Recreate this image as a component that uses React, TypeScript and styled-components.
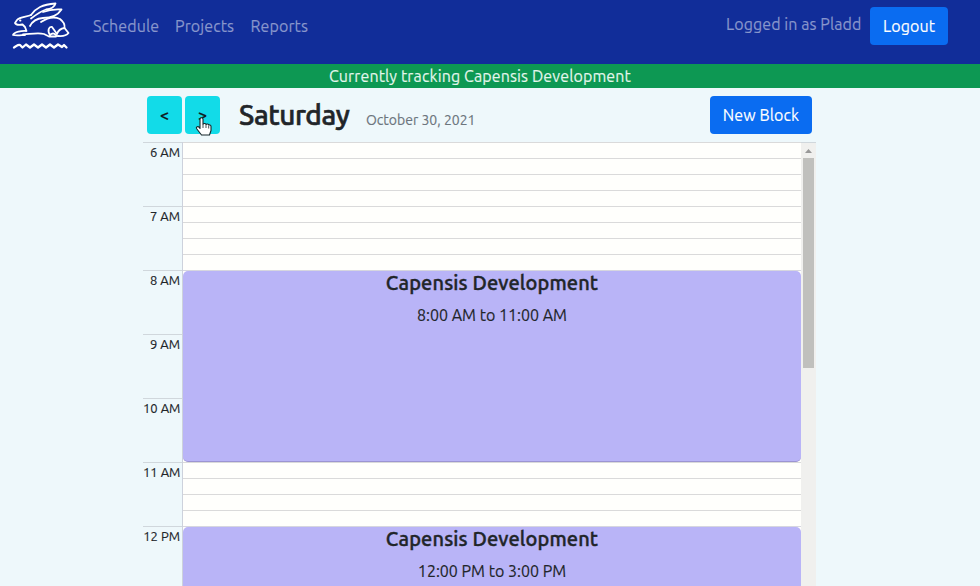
import React from "react";
import styled, { createGlobalStyle } from "styled-components";

const GlobalStyle = createGlobalStyle`
  *, *::before, *::after { box-sizing: border-box; }
  html, body, #root { height: 100%; }
  body {
    margin: 0;
    overflow: hidden;
    background: #eef8fb;
    color: #212529;
    font-family: Ubuntu, "Noto Sans", sans-serif;
    font-size: 16px;
    line-height: 24px;
    -webkit-text-stroke: 0.15px currentColor;
  }
`;

const Page = styled.div`
  display: flex;
  flex-direction: column;
  height: 586px;
  overflow: hidden;
`;

const Navbar = styled.nav`
  display: flex;
  flex: none;
  height: 64px;
  padding: 0 32px 0 12px;
  background: #112d99;
`;

const Logo = styled.svg`
  display: block;
  width: 58px;
  height: 52px;
`;

const NavLinks = styled.div`
  display: flex;
  gap: 16px;
  padding: 14px 0 0 23px;
`;

const Text = styled.span<{ $w: number }>`
  display: block;
  flex: none;
  width: ${(p) => p.$w}px;
  white-space: nowrap;
`;

const NavLink = styled(Text)`
  color: #8896cc;
  letter-spacing: 0.1px;
`;

const Account = styled.div`
  display: flex;
  gap: 8px;
  margin-left: auto;
  padding-top: 7px;
`;

const UserName = styled(Text)`
  padding-top: 5px;
  color: #8896cc;
  letter-spacing: 0.08px;
`;

const Button = styled.button<{ $w: number }>`
  display: flex;
  flex: none;
  align-items: center;
  justify-content: center;
  width: ${(p) => p.$w}px;
  height: 38px;
  padding: 0;
  border: 0;
  border-radius: 4px;
  background: #0a6cf1;
  color: #fff;
  font: inherit;
  letter-spacing: 0.1px;
`;

const Tracking = styled.div`
  flex: none;
  height: 24px;
  padding-right: 20px;
  background: #0d9853;
  color: #e4f6ec;
  letter-spacing: 0.12px;
  text-align: center;
`;

const Main = styled.main`
  display: flex;
  flex: 1;
  flex-direction: column;
  width: 673px;
  min-height: 0;
  margin-left: 143px;
`;

const DayHeader = styled.header`
  display: flex;
  flex: none;
  height: 54px;
  padding: 8px 4px 0;
`;

const StepButton = styled.button`
  position: relative;
  display: flex;
  flex: none;
  align-items: center;
  justify-content: center;
  width: 35px;
  height: 38px;
  margin-right: 3px;
  padding: 0;
  border: 0;
  border-radius: 4px;
  background: #12dbe8;
  color: #101c20;
  font: inherit;
  font-weight: 500;
`;

const Pointer = styled.svg`
  position: absolute;
  left: 10px;
  top: 21px;
  width: 19px;
  height: 21px;
`;

const Day = styled.h1`
  flex: none;
  width: 127px;
  margin: 0 0 0 16px;
  font-size: 28px;
  font-weight: 500;
  line-height: 38px;
  letter-spacing: -0.45px;
  -webkit-text-stroke: 0.6px currentColor;
`;

const DateLabel = styled(Text)`
  padding-top: 12px;
  color: #6c757d;
  font-size: 14px;
`;

const NewBlock = styled(Button)`
  margin-left: auto;
`;

const Scheduler = styled.section`
  display: grid;
  grid-template-columns: 39px 619px 15px;
  flex: 1;
  min-height: 0;
  overflow: hidden;
`;

const Hours = styled.div`
  display: flex;
  flex-direction: column;
`;

const Hour = styled.div`
  flex: none;
  height: 64px;
  padding-right: 2px;
  border-top: 1px solid #d0d7dc;
  font-size: 13px;
  line-height: 19px;
  text-align: right;
  white-space: nowrap;
`;

const Slots = styled.div`
  display: flex;
  flex-direction: column;
  border-left: 1px solid #cdd2dc;
  background: #fffffc;
`;

const Slot = styled.div`
  flex: none;
  height: 16px;
  border-top: 1px solid #dadada;
`;

const Booking = styled.div`
  flex: none;
  height: 192px;
  border-top: 1px solid #d6d6df;
`;

const BookingCard = styled.article`
  display: flex;
  flex-direction: column;
  align-items: center;
  gap: 8px;
  height: 191px;
  border-bottom: 1px solid #9c95d2;
  border-radius: 5px;
  background: #b9b4f7;
`;

const BookingTitle = styled.h2`
  margin: 0;
  font-size: 20px;
  font-weight: 500;
  line-height: 24px;
  letter-spacing: 0.12px;
  -webkit-text-stroke: 0.4px currentColor;
`;

const Scrollbar = styled.div`
  display: flex;
  flex-direction: column;
  justify-content: space-between;
  border-top: 1px solid #d0d7dc;
  background: #f0f0ee;
`;

const Thumb = styled.div`
  flex: none;
  width: 11px;
  height: 210px;
  margin: 0 0 auto 2px;
  background: #c0c0bd;
`;

const Arrow = styled.svg`
  display: block;
  flex: none;
  width: 15px;
`;

type Entry = { hour: string; booking?: string };

const hours: Entry[] = [
  { hour: "6 AM" },
  { hour: "7 AM" },
  { hour: "8 AM", booking: "8:00 AM to 11:00 AM" },
  { hour: "9 AM" },
  { hour: "10 AM" },
  { hour: "11 AM" },
  { hour: "12 PM", booking: "12:00 PM to 3:00 PM" },
];

function HareLogo() {
  return (
    <Logo viewBox="12 0 58 52" fill="none" stroke="#fff" strokeWidth="1.8" strokeLinecap="round" strokeLinejoin="round">
      <path d="M31 15C36 8 42 4.500 55.500 3.500C54.500 7 51 9 46 9.500C41 11 37 14 31 18.500" />
      <path d="M31 15C27 17 20 16.500 17 20L15 23C16 25 20 25 22.500 24.500L25 27L26.500 31C22 30.500 14 32 13 35C17 36 22 35 25 35" />
      <path d="M43 12C48 10 54 9 61.500 9.500C58 15 52 18 43 18C37 18.500 32 22 30 26" />
      <path d="M41 22C47 18 54 16 60 19C64 22 65 25 64.500 28L68.500 33C67 35 63 36.500 58 36" />
      <path d="M23 34.500C31 34 38 32.500 44 34L49 36.500L56 36.500" />
      <path d="M50 35C47 30 49 26.500 52 27L57 34C58 31 61 28.500 64.500 28" />
      <path d="M50 35C53 32 55 34 57 36" />
      <path d="M20 20.500h.5" strokeWidth="1.8" />
      <path d="M14 47.500C17 46 18 44 20 45L22.500 47.500L26 44.500L30 47.500L34 44.500L38 47.500L42 44.500L46 47.500L50 44.500L54 47.500L58 44.500L62 47L64 45L66.500 47.500" strokeWidth="2.3" />
    </Logo>
  );
}

function HandPointer() {
  return (
    <Pointer viewBox="0 0 19 21">
      <path d="M5 2.200C5 .2 8 .2 8 2.200V7C9 6 11 6.500 11 7.500C12 6.700 13.500 7 13.700 8C15 7.500 16 8.300 16 9.500V13.500L14.500 18H6.500L1.500 11.500C.8 10 3 9 4 10.200L5 11.500Z" fill="#fff" stroke="#17272a" strokeWidth="1.100" strokeLinejoin="round" />
      <path d="M8 7v4M11 8v3M13.700 8.500v3" stroke="#17272a" strokeWidth=".8" />
    </Pointer>
  );
}

export default function App() {
  return (
    <Page>
      <GlobalStyle />
      <Navbar>
        <HareLogo />
        <NavLinks>
          <NavLink $w={66}>Schedule</NavLink>
          <NavLink $w={59.5}>Projects</NavLink>
          <NavLink $w={58}>Reports</NavLink>
        </NavLinks>
        <Account>
          <UserName $w={136}>Logged in as Pladd</UserName>
          <Button $w={78}>Logout</Button>
        </Account>
      </Navbar>
      <Tracking>Currently tracking Capensis Development</Tracking>
      <Main>
        <DayHeader>
          <StepButton aria-label="Previous day">&lt;</StepButton>
          <StepButton aria-label="Next day">
            &gt;
            <HandPointer />
          </StepButton>
          <Day>Saturday</Day>
          <DateLabel $w={110}>October 30, 2021</DateLabel>
          <NewBlock $w={102}>New Block</NewBlock>
        </DayHeader>
        <Scheduler>
          <Hours>{hours.map(({ hour }) => <Hour key={hour}>{hour}</Hour>)}</Hours>
          <Slots>
            {hours.map(({ hour, booking }) => {
              if (booking) {
                return (
                  <Booking key={hour}>
                    <BookingCard>
                      <BookingTitle>Capensis Development</BookingTitle>
                      <span>{booking}</span>
                    </BookingCard>
                  </Booking>
                );
              }
              if (hour === "9 AM" || hour === "10 AM") return null;
              return [0, 15, 30, 45].map((minute) => <Slot key={hour + minute} />);
            })}
          </Slots>
          <Scrollbar>
            <Arrow height="15" viewBox="0 0 15 15"><path d="M4 10L7.500 6L11 10Z" fill="#989898" /></Arrow>
            <Thumb />
            <Arrow height="5" viewBox="0 0 15 5"><path d="M4 1H11L7.500 5Z" fill="#444" /></Arrow>
          </Scrollbar>
        </Scheduler>
      </Main>
    </Page>
  );
}
